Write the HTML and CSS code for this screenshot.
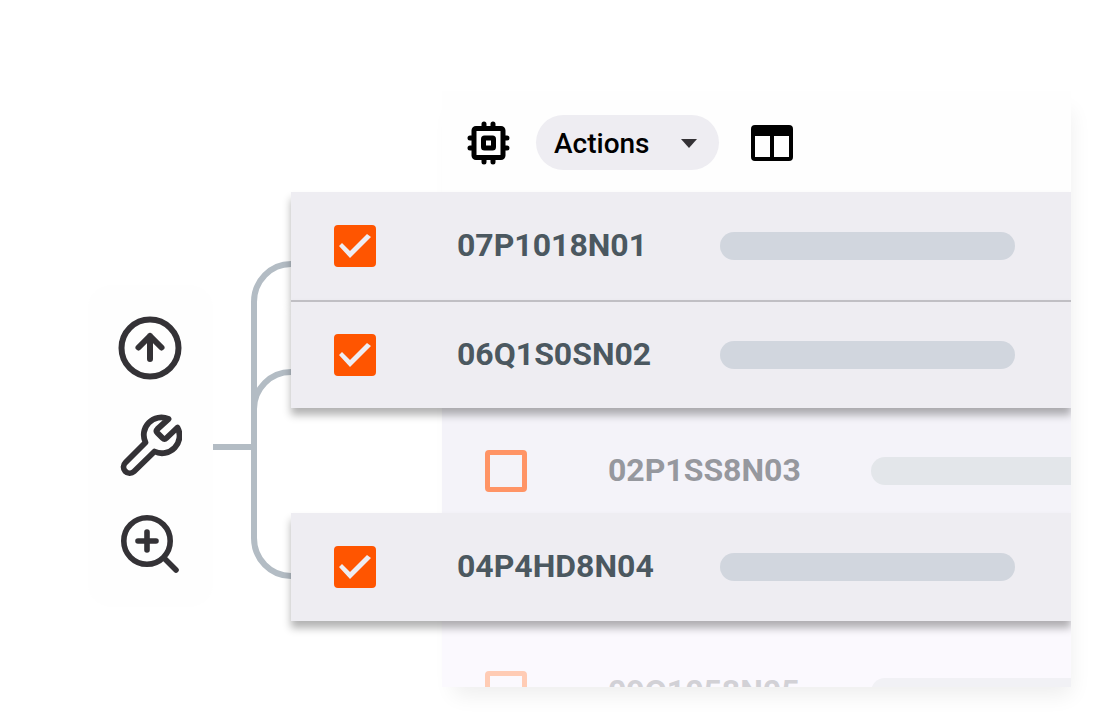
FILE: index.html
```
<!DOCTYPE html>
<html lang="en">
<head>
  <meta charset="UTF-8">
  <meta name="viewport" content="width=device-width, initial-scale=1.0">
  <title>Devices</title>
  <link rel="stylesheet" href="styles.css">
</head>
<body>
  <main class="scene">
    <!-- Tools -->
    <nav class="tools" aria-label="Tools">
      <button type="button" class="icon-btn" aria-label="Upload">
        <svg width="64" height="64" viewBox="0 0 64 64" fill="none" stroke="#343236" stroke-width="6" stroke-linecap="round" stroke-linejoin="round">
          <circle cx="32" cy="32" r="28.500"/>
          <path d="M32 43V20M20.500 31.500L32 20L43.500 31.500"/>
        </svg>
      </button>
      <button type="button" class="icon-btn" aria-label="Repair">
        <svg width="64" height="64" viewBox="0 0 64 64" fill="none" stroke="#343236" stroke-width="5.800" stroke-linecap="round" stroke-linejoin="round">
          <path d="M50.500 5A17.500 17.500 0 0 0 27.500 28.500L7.500 48.500A6 6 0 0 0 16 57.500L36.500 37.500A17.500 17.500 0 0 0 59.500 13.500L48.500 24Q46.500 26 44.500 24L39.500 19Q37.500 17 39.500 15Z"/>
        </svg>
      </button>
      <button type="button" class="icon-btn" aria-label="Zoom in">
        <svg width="64" height="64" viewBox="0 0 64 64" fill="none" stroke="#343236" stroke-width="5.600" stroke-linecap="round">
          <circle cx="29" cy="29" r="23.200"/>
          <path d="M29 20V38M20 29H38M46 46L58 58"/>
        </svg>
      </button>
    </nav>

    <svg class="connector" width="78" height="320" viewBox="0 0 78 320" fill="none" stroke="#b3bcc4" stroke-width="6">
      <path d="M0 162H41M78 -21A37 38 0 0 0 41 17V253A37 38 0 0 0 78 291M41 124A37 37 0 0 1 78 87"/>
    </svg>

    <!-- Device list -->
    <section class="panel">
      <div class="panel-body">
        <header class="toolbar">
          <svg width="44" height="44" viewBox="0 0 44 44" fill="none" stroke="#000" stroke-width="5" stroke-linecap="round">
            <rect x="8" y="7.500" width="29" height="29" rx="2"/>
            <rect x="17.500" y="17" width="10" height="10" rx="1"/>
            <path d="M18 3V6M27 3V6M18 38V41M27 38V41M4 17H6M4 27H6M39 17H41M39 27H41"/>
          </svg>
          <button type="button" class="actions">
            Actions
            <svg width="16" height="9" viewBox="0 0 16 9"><path d="M0 0H16L8 9Z" fill="#343236"/></svg>
          </button>
          <svg width="42" height="38" viewBox="0 0 42 38">
            <path fill-rule="evenodd" d="M4 1H38Q42 1 42 5V33Q42 37 38 37H4Q0 37 0 33V5Q0 1 4 1ZM4 12V33H19V12ZM23 12V33H38V12Z"/>
          </svg>
        </header>

        <ul class="rows">
          <li class="row selected">
            <label><input type="checkbox" checked><span class="code">07P1018N01</span></label>
            <span class="bar"></span>
          </li>
          <li class="row selected">
            <label><input type="checkbox" checked><span class="code">06Q1S0SN02</span></label>
            <span class="bar"></span>
          </li>
          <li class="row muted">
            <label><input type="checkbox"><span class="code">02P1SS8N03</span></label>
            <span class="bar"></span>
          </li>
          <li class="row selected">
            <label><input type="checkbox" checked><span class="code">04P4HD8N04</span></label>
            <span class="bar"></span>
          </li>
          <li class="row faded">
            <label><input type="checkbox"><span class="code">09Q1058N05</span></label>
            <span class="bar"></span>
          </li>
        </ul>
      </div>
    </section>
  </main>
</body>
</html>
```
FILE: styles.css
```
* {
  box-sizing: border-box;
}
body {
  margin: 0;
  font-family: Roboto, sans-serif;
  background: #fff;
}
.scene {
  display: flex;
  align-items: flex-start;
  padding: 91px 24px 36px 88px;
}

/* Tools */
.tools {
  display: flex;
  flex-direction: column;
  align-items: center;
  gap: 34px;
  width: 125px;
  margin-top: 194px;
  padding: 31px 2px 31px 0;
  border-radius: 24px;
  background: #fefefe;
}
.icon-btn {
  padding: 0;
  border: none;
  background: none;
  cursor: pointer;
}
.icon-btn svg {
  display: block;
}
.connector {
  flex: none;
  margin-top: 194px;
  overflow: visible;
}

/* Device list */
.panel {
  flex: 1;
  min-width: 0;
  margin-left: 151px;
  background: #fefefe;
  box-shadow: 6px 14px 20px -6px rgba(0, 0, 0, 0.07);
}
.panel-body {
  clip-path: inset(0 0 0 -180px);
}
.toolbar {
  display: flex;
  align-items: center;
  height: 101px;
  padding: 2px 24px 0;
}
.actions {
  display: flex;
  align-items: center;
  justify-content: space-between;
  width: 183px;
  height: 55px;
  margin: 0 32px 0 26px;
  padding: 2px 22px 0 18px;
  border: none;
  border-radius: 28px;
  background: #eeedf2;
  color: #000;
  font-family: inherit;
  font-size: 28px;
  font-weight: 500;
  cursor: pointer;
}
.rows {
  margin: 0;
  padding: 0;
  list-style: none;
}
.row {
  display: flex;
  align-items: center;
  height: 108px;
  padding-left: 43px;
}
.row label {
  display: flex;
  flex: none;
  align-items: center;
  gap: 81px;
  width: 386px;
}
.row input {
  appearance: none;
  flex: none;
  width: 42px;
  height: 42px;
  margin: 0;
  border: 5px solid #ff5500;
  border-radius: 4px;
}
.row input:checked {
  display: grid;
  place-items: center;
  background: #ff5500;
}
.row input:checked::after {
  content: "";
  width: 32px;
  height: 24px;
  background: #eeedf2;
  clip-path: polygon(0 12px, 3px 9px, 11px 17px, 28px 0, 32px 3px, 11px 24px);
}
.code {
  padding-bottom: 2px;
  color: #4b5860;
  font-size: 32px;
  font-weight: 700;
}
.bar {
  flex: none;
  width: 295px;
  height: 28px;
  border-radius: 14px;
  background: #d1d6de;
}
.selected {
  position: relative;
  margin-left: -151px;
  background: #eeedf2;
  box-shadow: 0 7px 8px rgba(0, 0, 0, 0.3);
}
.selected + .selected {
  border-top: 2px solid #c0bfc4;
}
.muted {
  height: 105px;
  padding-top: 21px;
  background: #f4f3f9;
  overflow: hidden;
}
.muted input {
  border-color: #ff9466;
}
.muted .code {
  color: #96989e;
}
.muted .bar {
  background: #e3e6ea;
}
.faded {
  align-items: flex-start;
  height: 66px;
  padding-top: 50px;
  background: #fbf9fe;
  overflow: hidden;
}
.faded input {
  border-color: #ffccb5;
}
.faded .code {
  color: #d2d1d6;
}
.faded .bar {
  margin-top: 7px;
  background: #f1f1f5;
}
```
